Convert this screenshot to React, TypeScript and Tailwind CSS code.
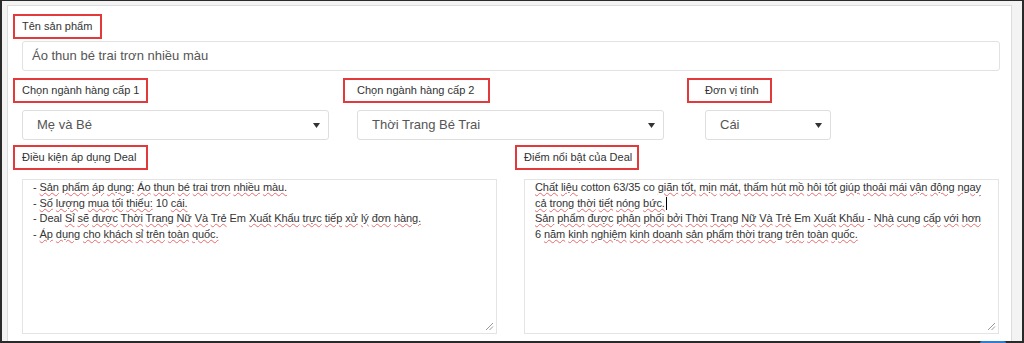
const skip = new Set(["-", "Deal", "Em", "cotton", "63/35", "co", "10", "6"]);

function Spell({ text }: { text: string }) {
  const words = text.split(" ");
  return (
    <div className="whitespace-nowrap">
      {words.map((w, i) => (
        <span key={i}>
          {skip.has(w) ? (
            w
          ) : (
            <span className="underline decoration-wavy decoration-[#e86a6a] decoration-1 underline-offset-[1px]">{w}</span>
          )}
          {i < words.length - 1 ? " " : ""}
        </span>
      ))}
    </div>
  );
}

function RedLabel({ text, className }: { text: string; className: string }) {
  return (
    <div className={"flex h-[25px] items-center border-2 border-[#e23a3a] text-[11px] text-[#333] " + className}>
      {text}
    </div>
  );
}

function Arrow() {
  return (
    <svg width="7" height="5" viewBox="0 0 7 5" className="shrink-0">
      <polygon points="0,0 7,0 3.5,5" fill="#333" />
    </svg>
  );
}

function Select({ value, className }: { value: string; className: string }) {
  return (
    <div className={"flex h-[30px] items-center justify-between rounded-[3px] border border-[#dedede] bg-white pl-[14px] pr-[8px] text-[13px] text-[#555] " + className}>
      <span>{value}</span>
      <Arrow />
    </div>
  );
}

function Grip() {
  return (
    <svg width="9" height="9" viewBox="0 0 9 9" className="absolute bottom-[2px] right-[2px]">
      <line x1="1" y1="8" x2="8" y2="1" stroke="#999" strokeWidth="1" />
      <line x1="4.5" y1="8" x2="8" y2="4.5" stroke="#999" strokeWidth="1" />
    </svg>
  );
}

function Area({ lines, caretAfter }: { lines: string[]; caretAfter?: number }) {
  return (
    <div className="relative h-[155px] w-[475px] border border-[#e4e4e4] bg-white px-[10px] pt-0 text-[11px] leading-[15.6px] tracking-[-0.08px] text-[#333]">
      {lines.map((l, i) => (
        <div key={i} className="flex items-center">
          <Spell text={l} />
          {caretAfter === i && <span className="ml-px inline-block h-[13px] w-px bg-black" />}
        </div>
      ))}
      <Grip />
    </div>
  );
}

export default function App() {
  return (
    <div className="relative flex h-[343px] w-[1024px] border-b-2 border-l-2 border-r-2 border-t border-[#2a2a2a] bg-[#f3f3f3] pl-[5px] pt-[4px] font-['Liberation_Sans',Arial,sans-serif]">
      <div className="flex-1 border-l border-r border-t border-[#dcdcdc] bg-white">
        <div className="mt-[8px] pl-[5px]">
          <RedLabel text="Tên sản phẩm" className="w-[89px] pl-[7px]" />
        </div>
        <div className="ml-[14px] mt-[2px] flex h-[30px] w-[978px] items-center rounded-[3px] border border-[#e2e2e2] pl-[9px] text-[13px] text-[#555]">
          Áo thun bé trai trơn nhiều màu
        </div>

        <div className="mt-[7px] flex pl-[14px]">
          <div className="flex w-[307px] flex-col">
            <RedLabel text="Chọn ngành hàng cấp 1" className="-ml-[9px] w-[135px] pl-[7px]" />
            <Select value="Mẹ và Bé" className="mt-[7px] w-[307px]" />
          </div>
          <div className="ml-[28px] flex w-[307px] flex-col">
            <RedLabel text="Chọn ngành hàng cấp 2" className="-ml-[14px] w-[147px] pl-[12px]" />
            <Select value="Thời Trang Bé Trai" className="mt-[7px] w-[307px]" />
          </div>
          <div className="ml-[41px] flex w-[126px] flex-col">
            <RedLabel text="Đơn vị tính" className="-ml-[18px] w-[85px] pl-[16px]" />
            <Select value="Cái" className="mt-[7px] w-[126px]" />
          </div>
        </div>

        <div className="mt-[5px] flex pl-[14px]">
          <div className="flex flex-col">
            <RedLabel text="Điều kiện áp dụng Deal" className="-ml-[9px] w-[135px] pl-[7px]" />
            <div className="mt-[9px]">
              <Area
                lines={[
                  "- Sản phẩm áp dụng: Áo thun bé trai trơn nhiều màu.",
                  "- Số lượng mua tối thiểu: 10 cái.",
                  "- Deal Sỉ sẽ được Thời Trang Nữ Và Trẻ Em Xuất Khẩu trực tiếp xử lý đơn hàng.",
                  "- Áp dụng cho khách sỉ trên toàn quốc.",
                ]}
              />
            </div>
          </div>
          <div className="ml-[27px] flex flex-col">
            <RedLabel text="Điểm nổi bật của Deal" className="-ml-[9px] w-[124px] pl-[7px]" />
            <div className="mt-[9px]">
              <Area
                caretAfter={1}
                lines={[
                  "Chất liệu cotton 63/35 co giãn tốt, mịn mát, thấm hút mồ hôi tốt giúp thoải mái vận động ngay",
                  "cả trong thời tiết nóng bức.",
                  "Sản phẩm được phân phối bởi Thời Trang Nữ Và Trẻ Em Xuất Khẩu - Nhà cung cấp với hơn",
                  "6 năm kinh nghiệm kinh doanh sản phẩm thời trang trên toàn quốc.",
                ]}
              />
            </div>
          </div>
        </div>
      </div>
      <div className="w-[10px] shrink-0" />
      <div className="absolute bottom-[-2px] left-[978px] h-[2px] w-[26px] rounded-t-sm bg-[#2f7fd0]" />
    </div>
  );
}
